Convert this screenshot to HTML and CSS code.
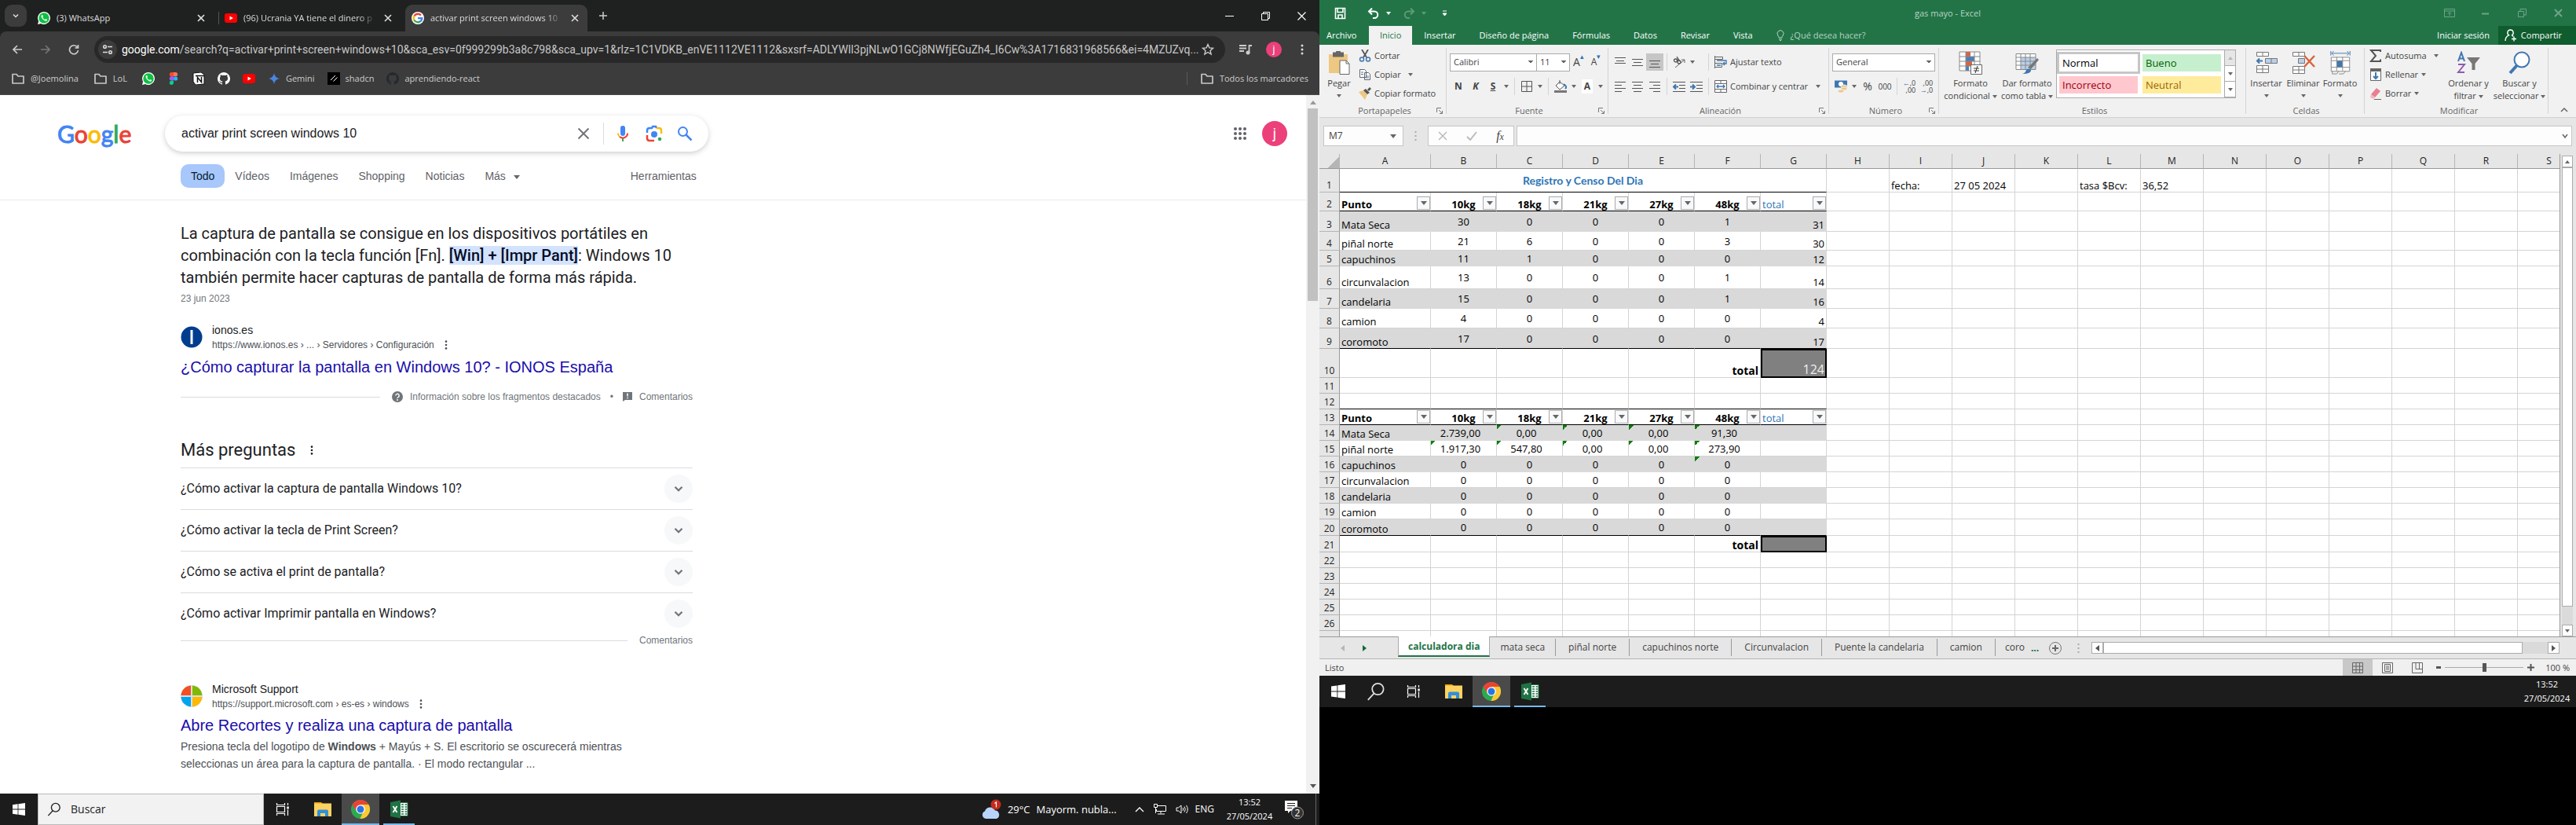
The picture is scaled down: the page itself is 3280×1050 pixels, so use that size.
FILE: index.html
```html
<!DOCTYPE html>
<html lang="es">
<head>
<meta charset="utf-8">
<title>Escritorio</title>
<link rel="stylesheet" href="styles.css">
</head>
<body>
<svg class="defs" aria-hidden="true">
  <symbol id="close" viewBox="0 0 16 16"><path d="M4 4l8 8M12 4l-8 8" stroke="currentColor" stroke-width="1.6"/></symbol>
  <symbol id="chev" viewBox="0 0 16 16"><path d="M4 6l4 4 4-4" fill="none" stroke="currentColor" stroke-width="2"/></symbol>
  <symbol id="whatsapp" viewBox="0 0 16 16"><path d="M8 0a8 8 0 0 0-6.900 12L0 16l4.100-1A8 8 0 1 0 8 0z" fill="#fff"/><circle cx="8" cy="8" r="6.700" fill="#0dc143"/><path d="M5.500 4c-1.800 1-.8 3.600 1.400 5.700 2.100 2 4.200 2.700 5.100 1 .4-.8 0-1-1.700-1.800l-1 1C8 9.500 6.600 8 6.200 7l.8-1c-.5-1.700-.7-2.200-1.500-2z" fill="#fff"/></symbol>
  <symbol id="youtube" viewBox="0 0 16 16"><rect y="2" width="16" height="12" rx="3" fill="#f00"/><path d="M6.500 5.500v5L11 8z" fill="#fff"/></symbol>
  <symbol id="google" viewBox="0 0 48 48"><circle cx="24" cy="24" r="24" fill="#fff"/><g fill="none" stroke-width="7"><path d="M36 13.500A16 16 0 0 0 10 16.500" stroke="#ea4335"/><path d="M10.200 16A16 16 0 0 0 10.200 32" stroke="#fbbc05"/><path d="M10 31.500A16 16 0 0 0 35 35.500" stroke="#34a853"/><path d="M34.500 36A16 16 0 0 0 40 24.500H24" stroke="#4285f4"/></g></symbol>
  <symbol id="folder" viewBox="0 0 16 16"><path d="M1 14V2.500h5L8 5h7v9z" fill="none" stroke="#c7c7c7" stroke-width="1.700" stroke-linejoin="round"/></symbol>
  <symbol id="github" viewBox="0 0 16 16"><path fill="currentColor" d="M8 0a8 8 0 0 0-2.500 15.600c.4.100.5-.2.500-.4v-1.400c-2.200.5-2.700-1-2.700-1-.4-.9-.9-1.200-.9-1.200-.7-.5.100-.5.100-.5.800.1 1.200.8 1.200.8.700 1.200 1.900.9 2.300.7.100-.5.300-.9.500-1.100-1.800-.2-3.600-.9-3.600-4 0-.9.300-1.600.8-2.100-.1-.2-.4-1 .1-2.100 0 0 .7-.2 2.200.8a7.500 7.500 0 0 1 4 0c1.500-1 2.200-.8 2.200-.8.500 1.100.2 1.900.1 2.100.5.500.8 1.200.8 2.100 0 3.100-1.900 3.800-3.700 4 .3.200.6.700.6 1.500v2.200c0 .2.100.5.500.4A8 8 0 0 0 8 0z"/></symbol>
  <symbol id="kebab" viewBox="0 0 16 16"><g fill="currentColor"><circle cx="8" cy="3" r="1.500"/><circle cx="8" cy="8" r="1.500"/><circle cx="8" cy="13" r="1.500"/></g></symbol>
  <symbol id="winlogo" viewBox="0 0 16 16"><path fill="#fff" d="M0 2.200 6.600 1.300V7.600H0zM7.400 1.200 16 0v7.600H7.400zM0 8.400h6.600v6.300L0 13.800zM7.400 8.400H16V16l-8.600-1.200z"/></symbol>
  <symbol id="lupa" viewBox="0 0 20 20"><g fill="none" stroke="currentColor" stroke-width="1.500"><circle cx="12" cy="7.500" r="6"/><path d="M8 12l-6.500 7"/></g></symbol>
  <symbol id="taskview" viewBox="0 0 18 18"><path d="M1.500 1v2.500h10V1M1.500 17v-2.500h10V17M1.500 5.500h10v7h-10zM15.500 1v3M15.500 9.500V17" fill="none" stroke="#fff" stroke-width="1.200"/><path d="M14.300 5.500h2.500v3h-2.500z" fill="#fff"/></symbol>
  <symbol id="explorer" viewBox="0 0 24 24"><path d="M1 3h9l2 2H1z" fill="#e39b0b"/><path d="M1 4.500h22V21H1z" fill="#fdd25f"/><path d="M5 21v-6.500a2 2 0 0 1 2-2h10a2 2 0 0 1 2 2V21h-4v-4H9v4z" fill="#2f8fdc"/></symbol>
  <symbol id="chrome" viewBox="0 0 24 24"><circle cx="12" cy="12" r="12" fill="#2da94f"/><path d="M22.400 6H12l3.500 9-4 9A12 12 0 0 0 22.400 6z" fill="#fcc934"/><path d="M1.600 6l5 8L12 6h10.400A12 12 0 0 0 1.600 6z" fill="#ea4335"/><circle cx="12" cy="12" r="5.800" fill="#fff"/><circle cx="12" cy="12" r="4.500" fill="#2a73e8"/></symbol>
  <symbol id="excel" viewBox="0 0 24 24"><path d="M12 3.500h11v17H12z" fill="#fff" stroke="#1f7244" stroke-width="1"/><path d="M15 6h3M15 9h3M15 12h3M15 15h3M15 18h3M19.500 6H22M19.500 9H22M19.500 12H22M19.500 15H22M19.500 18H22" stroke="#1f7244" stroke-width="1.500"/><path d="M1 3l13-2.500v23L1 21z" fill="#1f7244"/><path d="M4.500 8l5 8M9.500 8l-5 8" stroke="#fff" stroke-width="1.800"/></symbol>
  <symbol id="launch" viewBox="0 0 8 8"><path d="M.5 6V.5H6M3 3l4 4M7.500 4v3.500H4" fill="none" stroke="#777"/></symbol>
  <symbol id="left" viewBox="0 0 16 14"><path d="M1 1.500h14M1 5.500h9M1 9.500h14M1 13.500h9" stroke="#555" stroke-width="1"/></symbol>
</svg>

<main class="desktop">
<section class="screen" aria-label="Pantalla 1">
  <div class="browser">
    <div class="tabstrip">
      <button class="tabsearch" aria-label="Buscar pestañas"><svg width="12" height="12"><use href="#chev"/></svg></button>
      <div class="tab"><svg width="16" height="16"><use href="#whatsapp"/></svg><span>(3) WhatsApp</span><button aria-label="Cerrar"><svg width="16" height="16"><use href="#close"/></svg></button></div>
      <div class="tab divided"><svg width="16" height="16"><use href="#youtube"/></svg><span class="fade">(96) Ucrania YA tiene el dinero p</span><button aria-label="Cerrar"><svg width="16" height="16"><use href="#close"/></svg></button></div>
      <div class="tab active"><svg width="16" height="16"><use href="#google"/></svg><span class="fade">activar print screen windows 10</span><button aria-label="Cerrar"><svg width="16" height="16"><use href="#close"/></svg></button></div>
      <button class="newtab" aria-label="Nueva pestaña"><svg width="12" height="12" viewBox="0 0 12 12"><path d="M6 1v10M1 6h10" stroke="#ccc" stroke-width="1.500"/></svg></button>
      <div class="winctl">
        <button aria-label="Minimizar"><svg width="11" height="11"><path d="M0 5.500h11" stroke="#fff"/></svg></button>
        <button aria-label="Restaurar"><svg width="11" height="11"><path d="M.5 2.500h8v8h-8zM2.500 2.500v-2h8v8h-2" fill="none" stroke="#fff"/></svg></button>
        <button aria-label="Cerrar"><svg width="11" height="11"><path d="M.5.5l10 10M10.500.5l-10 10" stroke="#fff" stroke-width="1.200"/></svg></button>
      </div>
    </div>
    <div class="toolbar">
      <div class="navrow">
        <button aria-label="Atrás"><svg width="14" height="14" viewBox="0 0 14 14"><path d="M13 7H2M7 2L2 7l5 5" fill="none" stroke="#ccc" stroke-width="1.700"/></svg></button>
        <button aria-label="Adelante"><svg width="14" height="14" viewBox="0 0 14 14"><path d="M1 7h11M7 2l5 5-5 5" fill="none" stroke="#777" stroke-width="1.700"/></svg></button>
        <button aria-label="Recargar"><svg width="14" height="14" viewBox="0 0 14 14"><path d="M11.500 4A5.500 5.500 0 1 0 12.500 8M12.500 1v4H8.500" fill="none" stroke="#ccc" stroke-width="1.700"/></svg></button>
        <div class="omnibox">
          <button class="siteinfo" aria-label="Información del sitio"><svg width="14" height="14" viewBox="0 0 14 14"><g fill="none" stroke="#ddd" stroke-width="1.500"><circle cx="3.500" cy="3.500" r="1.800"/><circle cx="10.500" cy="10.500" r="1.800"/><path d="M7 3.500h6M1 10.500h6"/></g></svg></button>
          <p><b>google.com</b>/search?q=activar+print+screen+windows+10&amp;sca_esv=0f999299b3a8c798&amp;sca_upv=1&amp;rlz=1C1VDKB_enVE1112VE1112&amp;sxsrf=ADLYWIl3pjNLwO1GCj8NWfjEGuZh4_I6Cw%3A1716831968566&amp;ei=4MZUZvq...</p>
          <button aria-label="Favorito"><svg width="16" height="16" viewBox="0 0 16 16"><path d="M8 1.500l1.900 4.400 4.700.4-3.600 3.100 1.100 4.600L8 11.500 3.900 14 5 9.400 1.400 6.300l4.700-.4z" fill="none" stroke="#ccc" stroke-width="1.400"/></svg></button>
        </div>
        <button aria-label="Multimedia"><svg width="16" height="16" viewBox="0 0 16 16"><path d="M0 3h9M0 6.500h9M0 10h6M12.500 12V3H16" fill="none" stroke="#ccc" stroke-width="1.800"/><circle cx="11" cy="12" r="2.500" fill="#ccc"/></svg></button>
        <button aria-label="Perfil"><span class="avatar small">j</span></button>
        <button class="light" aria-label="Menú"><svg width="16" height="16"><use href="#kebab"/></svg></button>
      </div>
      <nav class="bookmarks">
        <a href="#" class="dir"><svg width="18" height="16"><use href="#folder"/></svg>@Joemolina</a>
        <a href="#" class="dir"><svg width="18" height="16"><use href="#folder"/></svg>LoL</a>
        <a href="#" aria-label="WhatsApp"><svg width="16" height="16"><use href="#whatsapp"/></svg></a>
        <a href="#" aria-label="Figma"><svg width="16" height="16" viewBox="0 0 16 16"><path d="M8 0H5.500a2.600 2.600 0 0 0 0 5.300H8z" fill="#f24e1e"/><path d="M8 0h2.500a2.600 2.600 0 0 1 0 5.300H8z" fill="#ff7262"/><path d="M8 5.300H5.500a2.600 2.600 0 0 0 0 5.300H8z" fill="#a259ff"/><circle cx="10.600" cy="8" r="2.600" fill="#1abcfe"/><path d="M8 10.700H5.500A2.600 2.600 0 1 0 8 13.300z" fill="#0acf83"/></svg></a>
        <a href="#" aria-label="Notion"><svg width="16" height="16" viewBox="0 0 16 16"><path d="M1 1l10-1 4 3v12l-11 1-3-4z" fill="#fff" stroke="#111"/><path d="M4 4.500h11M6.500 13V6.500l5 6V6" fill="none" stroke="#111" stroke-width="1.500"/></svg></a>
        <a href="#" class="white" aria-label="GitHub"><svg width="16" height="16"><use href="#github"/></svg></a>
        <a href="#" aria-label="YouTube"><svg width="16" height="16"><use href="#youtube"/></svg></a>
        <a href="#"><svg width="16" height="16" viewBox="0 0 16 16"><path d="M8 1c.7 4 3 6.300 7 7-4 .7-6.300 3-7 7-.7-4-3-6.300-7-7 4-.7 6.300-3 7-7z" fill="#4a86dd"/></svg>Gemini</a>
        <a href="#"><svg width="16" height="16" viewBox="0 0 16 16"><path d="M0 0h16v16H0z"/><path d="M4 10l6-6M7.500 11.500l5-5" stroke="#fff"/></svg>shadcn</a>
        <a href="#"><svg class="dark" width="16" height="16"><use href="#github"/></svg>aprendiendo-react</a>
        <a href="#" class="all"><svg width="18" height="16"><use href="#folder"/></svg>Todos los marcadores</a>
      </nav>
    </div>

    <div class="viewport">
      <div class="page">
        <header class="ghead">
          <a class="logo" href="#" aria-label="Google"><i class="b">G</i><i class="r">o</i><i class="y">o</i><i class="b">g</i><i class="g">l</i><i class="r">e</i></a>
          <form class="gsearch">
            <input type="text" aria-label="Buscar" value="activar print screen windows 10">
            <button type="button" class="clear" aria-label="Borrar"><svg width="24" height="24" viewBox="0 0 24 24"><path d="M5.500 5.500l13 13M18.500 5.500l-13 13" stroke="#70757a" stroke-width="2"/></svg></button>
            <button type="button" aria-label="Búsqueda por voz"><svg width="24" height="24" viewBox="0 0 24 24"><rect x="9" y="2" width="6" height="13" rx="3" fill="#4285f4"/><path d="M11 18h2v4h-2z" fill="#34a853"/><path d="M6 11.500a6 6 0 0 0 2 4.600" fill="none" stroke="#fbbc04" stroke-width="2"/><path d="M8 16a6 6 0 0 0 10-4.500" fill="none" stroke="#ea4335" stroke-width="2"/></svg></button>
            <button type="button" aria-label="Buscar por imagen"><svg width="24" height="24" viewBox="0 0 24 24"><circle cx="12" cy="13" r="4" fill="#4285f4"/><g fill="none" stroke-width="2.500"><path d="M3 11V8q0-3 3-3h3l1-2h4l1 2" stroke="#4285f4"/><path d="M15 5h3q3 0 3 3v4" stroke="#fbbc04"/><path d="M3 14v4q0 3 3 3h6" stroke="#ea4335"/></g><circle cx="19" cy="19" r="2.300" fill="#34a853"/></svg></button>
            <button type="submit" class="go" aria-label="Buscar"><svg width="24" height="24" viewBox="0 0 24 24"><circle cx="9.500" cy="9.500" r="5.500" fill="none" stroke="#4285f4" stroke-width="2"/><path d="M13.500 13.500l7 7" stroke="#4285f4" stroke-width="2.500"/></svg></button>
          </form>
          <div class="account">
            <button aria-label="Aplicaciones"><svg width="16" height="16" viewBox="0 0 16 16"><g fill="#5f6368"><circle cx="2" cy="2" r="2"/><circle cx="8" cy="2" r="2"/><circle cx="14" cy="2" r="2"/><circle cx="2" cy="8" r="2"/><circle cx="8" cy="8" r="2"/><circle cx="14" cy="8" r="2"/><circle cx="2" cy="14" r="2"/><circle cx="8" cy="14" r="2"/><circle cx="14" cy="14" r="2"/></g></svg></button>
            <button aria-label="Cuenta"><span class="avatar">j</span></button>
          </div>
        </header>
        <nav class="gtabs">
          <a class="on" href="#">Todo</a><a href="#">Vídeos</a><a href="#">Imágenes</a><a href="#">Shopping</a><a href="#">Noticias</a><a href="#">Más <i class="caret"></i></a>
          <a class="tools" href="#">Herramientas</a>
        </nav>
        <div class="results">
          <p class="snippet">La captura de pantalla se consigue en los dispositivos portátiles en combinación con la tecla función [Fn]. <mark>[Win] + [Impr Pant]</mark>: Windows 10 también permite hacer capturas de pantalla de forma más rápida.</p>
          <p class="date">23 jun 2023</p>
          <article class="hit first">
            <div class="src"><svg width="28" height="28" viewBox="0 0 28 28"><circle cx="14" cy="14" r="13.500" fill="#003d8f"/><path d="M14 5v18" stroke="#fff" stroke-width="3"/></svg>
              <div><p>ionos.es</p><cite>https://www.ionos.es › ... › Servidores › Configuración <svg width="14" height="14"><use href="#kebab"/></svg></cite></div></div>
            <h3><a href="#">¿Cómo capturar la pantalla en Windows 10? - IONOS España</a></h3>
          </article>
          <div class="feedback"><hr><svg width="14" height="14" viewBox="0 0 14 14"><circle cx="7" cy="7" r="7" fill="#70757a"/><path d="M4.800 5.500a2.200 2.200 0 1 1 3.200 2Q7 8 7 9" fill="none" stroke="#fff" stroke-width="1.400"/><circle cx="7" cy="11" r="1" fill="#fff"/></svg><a href="#">Información sobre los fragmentos destacados</a><span>•</span><svg width="12" height="12" viewBox="0 0 12 12"><path d="M0 0h12v10H3l-3 2z" fill="#70757a"/><path d="M6 1.500v4M6 6.800v1.500" stroke="#fff" stroke-width="1.500"/></svg><a href="#">Comentarios</a></div>
          <h2>Más preguntas <svg width="14" height="14"><use href="#kebab"/></svg></h2>
          <div class="faq">
            <button>¿Cómo activar la captura de pantalla Windows 10?<i><svg width="18" height="18"><use href="#chev"/></svg></i></button>
            <button>¿Cómo activar la tecla de Print Screen?<i><svg width="18" height="18"><use href="#chev"/></svg></i></button>
            <button>¿Cómo se activa el print de pantalla?<i><svg width="18" height="18"><use href="#chev"/></svg></i></button>
            <button>¿Cómo activar Imprimir pantalla en Windows?<i><svg width="18" height="18"><use href="#chev"/></svg></i></button>
          </div>
          <div class="feedback end"><hr><a href="#">Comentarios</a></div>
          <article class="hit second">
            <div class="src"><svg width="28" height="28" viewBox="0 0 28 28"><circle cx="14" cy="14" r="14" fill="#ddd"/><path d="M13 .5V13H.5A13.500 13.500 0 0 1 13 .5z" fill="#f25022"/><path d="M15 .5V13h12.500A13.500 13.500 0 0 0 15 .5z" fill="#7fba00"/><path d="M13 27.500V15H.5A13.500 13.500 0 0 0 13 27.500z" fill="#00a4ef"/><path d="M15 27.500V15h12.500A13.500 13.500 0 0 1 15 27.500z" fill="#ffb900"/></svg>
              <div><p>Microsoft Support</p><cite>https://support.microsoft.com › es-es › windows <svg width="14" height="14"><use href="#kebab"/></svg></cite></div></div>
            <h3><a href="#">Abre Recortes y realiza una captura de pantalla</a></h3>
            <p class="desc">Presiona tecla del logotipo de <b>Windows</b> + Mayús + S. El escritorio se oscurecerá mientras seleccionas un área para la captura de pantalla. · El modo rectangular ...</p>
          </article>
        </div>
      </div>
      <div class="gscroll"><i class="tri up"></i><i class="thumb"></i><i class="tri down"></i></div>
    </div>
  </div>
  <footer class="taskbar">
    <button aria-label="Inicio"><svg width="16" height="16"><use href="#winlogo"/></svg></button>
    <label class="tsearch"><svg width="18" height="18"><use href="#lupa"/></svg><input type="text" value="Buscar" aria-label="Buscar"></label>
    <button class="tv" aria-label="Vista de tareas"><svg width="18" height="18"><use href="#taskview"/></svg></button>
    <button aria-label="Explorador"><svg width="24" height="24"><use href="#explorer"/></svg></button>
    <button class="run focus" aria-label="Chrome"><svg width="24" height="24"><use href="#chrome"/></svg></button>
    <button class="run" aria-label="Excel"><svg width="24" height="24"><use href="#excel"/></svg></button>
    <div class="tray">
      <svg width="26" height="26" viewBox="0 0 26 26"><path d="M6 25a5 5 0 0 1-1-9.500 7 7 0 0 1 13-1 5.500 5.500 0 0 1 2 10.500z" fill="#b9d4fb"/><circle cx="19" cy="7" r="6.500" fill="#c42b1c"/><path d="M17.500 5.500L19.500 4v6.500" fill="none" stroke="#fff" stroke-width="1.200"/></svg>
      <span>29°C</span><span>Mayorm. nubla...</span>
      <svg class="up" width="12" height="8" viewBox="0 0 12 8"><path d="M1 7l5-5 5 5" fill="none" stroke="#fff" stroke-width="1.300"/></svg>
      <svg width="16" height="14" viewBox="0 0 16 14"><path d="M5 2.500h10.500v7H3.500V7M9 9.500v3M5 13h9M.5.5h4v4h-4zM2.500 4.500V12" fill="none" stroke="#fff"/></svg>
      <svg width="17" height="14" viewBox="0 0 17 14"><path d="M1 5h2.500L7 2v10L3.500 9H1zM9 5q1.500 2 0 4M11 3.500q2.500 3.500 0 7M13.500 2q3.500 5 0 10" fill="none" stroke="#fff"/></svg>
      <span class="lang">ENG</span>
      <time>13:52<br>27/05/2024</time>
      <svg width="24" height="26" viewBox="0 0 24 26"><path d="M0 2h16v13H7l-3 3v-3H0z" fill="#fff"/><path d="M3 5.500h10M3 8.500h10M3 11.500h6" stroke="#222"/><circle cx="16" cy="17.500" r="7.500" fill="#333" stroke="#999"/><text x="16" y="22" text-anchor="middle">2</text></svg>
      <i class="peek"></i>
    </div>
  </footer>
</section>

<section class="screen second-screen" aria-label="Pantalla 2">
  <div class="excel">
    <header class="xtitle">
      <div class="qat">
        <svg width="16" height="16" viewBox="0 0 16 16"><path d="M1.500 1.500h12v13h-12zM4 1.500v5h7v-5M5 14v-4h5v4" fill="none" stroke="#fff" stroke-width="1.600"/></svg>
        <svg class="undo" width="16" height="14" viewBox="0 0 16 14"><path d="M6 .5L2 4.500l4 4M2 4.500h7a4 4 0 0 1 0 8.500H7" fill="none" stroke="#fff" stroke-width="2"/></svg><i class="caret w"></i>
        <svg class="redo" width="16" height="14" viewBox="0 0 16 14"><path d="M10 .5l4 4-4 4M14 4.500H7A4 4 0 0 0 7 13h2" fill="none" stroke="#5d9a77" stroke-width="2"/></svg><i class="caret w dim"></i>
        <svg class="more" width="7" height="8" viewBox="0 0 7 8"><path d="M1 1h5M1 4l2.500 3L6 4z" fill="#fff" stroke="#fff"/></svg>
      </div>
      <h1>gas mayo - Excel</h1>
      <div class="xctl">
        <button aria-label="Opciones de cinta"><svg width="14" height="11"><path d="M.5.5h13v10H.5zM.5 3h13M7 9V5M5 6.500l2-2 2 2" fill="none" stroke="#6fa588"/></svg></button>
        <button aria-label="Minimizar"><svg width="10" height="11"><path d="M0 6.500h9" stroke="#6fa588" stroke-width="2"/></svg></button>
        <button aria-label="Restaurar"><svg width="11" height="11"><path d="M.5 3.500h7v7h-7zM3 3.500v-3h7.500V8H8" fill="none" stroke="#6fa588"/></svg></button>
        <button aria-label="Cerrar"><svg width="11" height="11"><path d="M1 1l9 9M10 1l-9 9" stroke="#6fa588" stroke-width="2"/></svg></button>
      </div>
    </header>
    <nav class="xtabs">
      <a href="#" class="file">Archivo</a><a href="#" class="on">Inicio</a><a href="#">Insertar</a><a href="#">Diseño de página</a><a href="#">Fórmulas</a><a href="#">Datos</a><a href="#">Revisar</a><a href="#">Vista</a>
      <a href="#" class="tell"><svg width="10" height="14" viewBox="0 0 10 14"><path d="M3 10Q3 8.500 1.700 7a4 4 0 1 1 6.600 0Q7 8.500 7 10zM3 12h4M4 13.500h2" fill="none" stroke="#b6d3c3"/></svg>¿Qué desea hacer?</a>
      <a href="#" class="signin">Iniciar sesión</a>
      <button class="share"><svg width="16" height="16" viewBox="0 0 16 16"><path d="M7.500 1a3.700 3.700 0 0 1 2 6.800L11 9.500M7.500 1a3.700 3.700 0 0 0-2 6.800Q1 9.500 1 15M12 9.500v6M9 12.500h6" fill="none" stroke="#fff" stroke-width="1.400"/></svg>Compartir</button>
    </nav>
    <div class="ribbon">
      <section class="grp g-clip"><div class="body">
        <button class="big"><svg width="28" height="30" viewBox="0 0 28 30"><path d="M1 4h24v24H1z" fill="#edc882"/><path d="M6 1.500h4a3 3 0 0 1 6 0h4v6H6z" fill="#666"/><path d="M15 12h8l4 4v13.500H15z" fill="#fff" stroke="#666"/><path d="M23 12v4h4" fill="none" stroke="#666"/></svg>Pegar<i class="caret"></i></button>
        <div class="stack">
          <button><svg width="16" height="16" viewBox="0 0 16 16"><path d="M4 0l6 10M12 0L6 10" stroke="#555" stroke-width="1.800"/><g fill="none" stroke="#4077b0" stroke-width="1.500"><circle cx="4" cy="12.500" r="2.500"/><circle cx="12" cy="12.500" r="2.500"/></g></svg>Cortar</button>
          <button><svg width="16" height="16" viewBox="0 0 16 16"><path d="M1.500 1.500h6l2 2v8h-8zM7.500 5.500h5l2 2v7h-7z" fill="#fff" stroke="#666"/><path d="M3 5h3M3 7.500h3M9 10h4M9 12h4" stroke="#4077b0"/></svg>Copiar <i class="caret gap"></i></button>
          <button><svg width="16" height="16" viewBox="0 0 16 16"><path d="M0 6l6-2 5 5-3 7z" fill="#edc882"/><path d="M6 4l3-2 5 5-3 2zM11 3l3-3 2 2-3 3z" fill="#555"/></svg>Copiar formato</button>
        </div></div>
        <footer>Portapapeles<svg width="8" height="8"><use href="#launch"/></svg></footer></section>

      <section class="grp g-font"><div class="body rows">
        <div class="row"><select aria-label="Fuente" class="w111"><option>Calibri</option></select><select aria-label="Tamaño" class="w42"><option>11</option></select><button class="ib a1">A<i class="blue">▴</i></button><button class="ib a2">A<i class="blue">▾</i></button></div>
        <div class="row"><button class="ib"><b>N</b></button><button class="ib"><b><em>K</em></b></button><button class="ib"><b><u>S</u></b></button><i class="caret c"></i><i class="sep"></i>
          <button class="ib" aria-label="Bordes"><svg width="14" height="14"><path d="M.5.5h13v13H.5zM7 .5v13M.5 7h13" fill="none" stroke="#555"/></svg></button><i class="caret c"></i><i class="sep"></i>
          <button class="ib" aria-label="Relleno"><svg width="16" height="16" viewBox="0 0 16 16"><path d="M7 2l6 5-6 5-5-5zM7 5V0" fill="#fff" stroke="#555"/><path d="M12 5q5 3 2 6" stroke="#4077b0" stroke-width="2" fill="none"/><path d="M0 13h16v3H0z" fill="#777"/></svg></button><i class="caret c"></i>
          <button class="ib fc"><b>A</b></button><i class="caret c"></i></div></div>
        <footer>Fuente<svg width="8" height="8"><use href="#launch"/></svg></footer></section>

      <section class="grp g-align"><div class="body rows">
        <div class="row"><button class="ib" aria-label="Arriba"><svg width="14" height="14"><path d="M0 1.500h14M2 5.500h10M0 8.500h14" stroke="#555"/></svg></button><button class="ib" aria-label="Medio"><svg width="14" height="14"><path d="M0 3.500h14M2 7.500h10M0 11.500h14" stroke="#555"/></svg></button><button class="ib on" aria-label="Abajo"><svg width="14" height="14"><path d="M0 5.500h14M2 9.500h10M0 13.500h14" stroke="#555"/></svg></button><i class="sep"></i>
          <button class="ib" aria-label="Orientación"><svg width="16" height="16" viewBox="0 0 16 16"><path d="M3 15L15 5M11 5h4v4" fill="none" stroke="#666"/><g fill="none" stroke="#555" stroke-width="1.300"><circle cx="3.500" cy="6" r="2"/><circle cx="8" cy="8" r="2"/><path d="M5 3.500l2 3.500M5 1l4 6"/></g></svg></button><i class="caret c wide"></i><i class="sep"></i>
          <button class="txt"><svg width="16" height="16" viewBox="0 0 16 16"><path d="M.5 0v16M.5 1.500h10v3H.5M.5 9.500h9v5H.5" fill="none" stroke="#666"/><path d="M3 6h12v4h-4M13 8l-2 2 2 2M3 12h5" fill="none" stroke="#4077b0" stroke-width="1.400"/></svg>Ajustar texto</button></div>
        <div class="row"><button class="ib" aria-label="Izquierda"><svg width="16" height="14"><use href="#left"/></svg></button><button class="ib" aria-label="Centro"><svg width="14" height="14"><path d="M0 1.500h14M2 5.500h10M0 9.500h14M2 13.500h10" stroke="#555"/></svg></button><button class="ib" aria-label="Derecha"><svg width="14" height="14"><path d="M0 1.500h14M5 5.500h9M0 9.500h14M5 13.500h9" stroke="#555"/></svg></button><i class="sep"></i>
          <button class="ib" aria-label="Menos sangría"><svg width="16" height="14"><path d="M0 1.500h16M8 5.500h8M8 9.500h8M0 13.500h16" stroke="#555"/><path d="M7 7.500H1M4 4.500l-3 3 3 3" fill="none" stroke="#4077b0" stroke-width="2"/></svg></button><button class="ib" aria-label="Más sangría"><svg width="16" height="14"><path d="M0 1.500h16M8 5.500h8M8 9.500h8M0 13.500h16" stroke="#555"/><path d="M0 7.500h6M3 4.500l3 3-3 3" fill="none" stroke="#4077b0" stroke-width="2"/></svg></button><i class="sep"></i>
          <button class="txt"><svg width="16" height="16" viewBox="0 0 16 16"><path d="M.5.500h15v15H.5zM.5 4.500h15M.5 11.500h15M8 .5v4M8 11.500v4" fill="#fff" stroke="#666"/><path d="M3 8h10M5 6L3 8l2 2M11 6l2 2-2 2" fill="none" stroke="#4077b0" stroke-width="1.300"/></svg>Combinar y centrar<i class="caret gap"></i></button></div></div>
        <footer>Alineación<svg width="8" height="8"><use href="#launch"/></svg></footer></section>

      <section class="grp g-num"><div class="body rows">
        <div class="row"><select aria-label="Formato de número" class="w131"><option>General</option></select></div>
        <div class="row"><button class="ib" aria-label="Moneda"><svg width="17" height="16" viewBox="0 0 17 16"><path d="M0 .5h16v9H0z" fill="#4077b0"/><circle cx="8" cy="5" r="3" fill="#fff"/><g fill="#edc882" stroke="#f1f1f1"><ellipse cx="12" cy="8" rx="4" ry="2"/><ellipse cx="12" cy="11" rx="4" ry="2"/><ellipse cx="8" cy="14" rx="4" ry="2"/></g></svg></button><i class="caret c"></i><button class="ib pc">%</button><button class="ib z">000</button><i class="sep"></i><button class="ib z d"><span><i class="blue">←</i>,0<br>,00</span></button><button class="ib z d"><span>,00<br><i class="blue">→</i>,0</span></button></div></div>
        <footer>Número<svg width="8" height="8"><use href="#launch"/></svg></footer></section>

      <section class="grp g-sty"><div class="body">
        <button class="big w70"><svg width="30" height="30" viewBox="0 0 30 30"><path d="M1 1h26v24H1z" fill="#fff"/><path d="M9 1h6v6H9zM9 13h8v6H9z" fill="#d9643c"/><path d="M9 7h11v6H9zM9 19h4v6H9z" fill="#4a7fc0"/><path d="M1 1h26v24H1zM1 7h26M1 13h26M1 19h26M9 1v24M20 1v24" fill="none" stroke="#888"/><path d="M15.500 17.500h14v12h-14z" fill="#fff" stroke="#666"/><path d="M19 22h7M19 25h7M24 19l-3 9" stroke="#333"/></svg>Formato<span>condicional <i class="caret"></i></span></button>
        <button class="big w76"><svg width="30" height="30" viewBox="0 0 30 30"><path d="M1 3.500h25v20H1z" fill="#fff"/><path d="M7 8h19v15H7z" fill="#b8d0ea"/><path d="M1 3.500h25v20H1zM1 8h25M1 13h25M1 18h25M7 3.500v20M13 3.500v20M19 3.500v20" fill="none" stroke="#888"/><path d="M28 9l2 2-10 12-4-2z" fill="#777"/><path d="M9 29q4-1 5-5 3-3 6 0 1 5-11 5z" fill="#4077b0"/></svg>Dar formato<span>como tabla <i class="caret"></i></span></button>
        <div class="gallery"><div class="cells"><button class="normal">Normal</button><button class="good">Bueno</button><button class="bad">Incorrecto</button><button class="neutral">Neutral</button></div>
          <div class="gs"><button class="off" aria-label="Subir"><i class="caret flip"></i></button><button aria-label="Bajar"><i class="caret"></i></button><button aria-label="Más"><i class="caret bar"></i></button></div></div></div>
        <footer>Estilos</footer></section>

      <section class="grp g-cell"><div class="body">
        <button class="big w47"><svg width="28" height="30" viewBox="0 0 28 30"><path d="M1.500 1.500h15v5h-15zM9 1.500v5M1.500 18.500h15v9h-15zM9 18.500v9M1.500 23h15" fill="#fff" stroke="#777"/><path d="M12.500 9.500h15v6h-15zM20 9.500v6" fill="#b8d0ea" stroke="#777"/><path d="M9 12.500H2M5 9.500l-3 3 3 3" fill="none" stroke="#4077b0" stroke-width="2"/></svg>Insertar<i class="caret"></i></button>
        <button class="big w47"><svg width="30" height="30" viewBox="0 0 30 30"><path d="M1.500 1.500h15v5h-15zM9 1.500v5M1.500 19.500h15v9h-15zM9 19.500v9M1.500 24h15" fill="#fff" stroke="#777"/><path d="M8.500 9.500h8v6h-8z" fill="#b8d0ea" stroke="#777"/><path d="M16 6l13 14M29 6L16 20" stroke="#d9643c" stroke-width="2.500"/></svg>Eliminar<i class="caret"></i></button>
        <button class="big w47"><svg width="28" height="32" viewBox="0 0 28 32"><path d="M3 3h22M5 0L2 3l3 3M23 0l3 3-3 3M1 0v6M27 0v6" fill="none" stroke="#4077b0"/><path d="M1.500 8.500h25v19h-25z" fill="#fff"/><path d="M9 13h8v9H9z" fill="#4077b0"/><path d="M1.500 8.500h25v19h-25zM1.500 13h25M1.500 22h25M9 8v19M17 8v19M3 27v4h6l3-4M12 31h6l3-4" fill="none" stroke="#888"/></svg>Formato<i class="caret"></i></button></div>
        <footer>Celdas</footer></section>

      <section class="grp g-edit"><div class="body">
        <div class="stack">
          <button><svg width="16" height="16" viewBox="0 0 16 16"><path d="M14 3V1H2l6 7-6 7h12v-2.500" fill="none" stroke="#555" stroke-width="2"/></svg>Autosuma <i class="caret gap"></i></button>
          <button><svg width="16" height="16" viewBox="0 0 16 16"><path d="M1.500.5h13v15h-13z" fill="#fff" stroke="#666"/><path d="M1 0h14v4H1z" fill="#666"/><path d="M8 5v8M5 10l3 3 3-3" fill="none" stroke="#4077b0" stroke-width="2"/></svg>Rellenar <i class="caret"></i></button>
          <button><svg width="16" height="16" viewBox="0 0 16 16"><path d="M2 9l7-8 5 4-7 8z" fill="#e8808f"/><path d="M2 9l5 4-2 2-4-2z" fill="#f3b8c0"/><path d="M6 15.500h9" stroke="#666"/></svg>Borrar <i class="caret"></i></button>
        </div>
        <button class="big w60"><svg width="30" height="30" viewBox="0 0 30 30"><path d="M2 13L6 2l4 11M3.500 9.500h5" fill="none" stroke="#4077b0" stroke-width="2"/><path d="M2 17h8L2 27h8" fill="none" stroke="#8e5bb0" stroke-width="2"/><path d="M13 8h17l-6.500 8v8h-4v-8z" fill="#777"/></svg>Ordenar y<span>filtrar <i class="caret"></i></span></button>
        <button class="big w70"><svg width="28" height="30" viewBox="0 0 28 30"><circle cx="17" cy="11" r="9.500" fill="#fff" stroke="#4077b0" stroke-width="2"/><path d="M11 18L2 28" stroke="#4077b0" stroke-width="4"/></svg>Buscar y<span>seleccionar <i class="caret"></i></span></button></div>
        <footer>Modificar</footer></section>
      <button class="collapse" aria-label="Contraer"><svg width="10" height="6"><path d="M1 5l4-4 4 4" fill="none" stroke="#666" stroke-width="1.500"/></svg></button>
    </div>

    <div class="fbar">
      <label class="namebox"><input type="text" value="M7" aria-label="Cuadro de nombres"><i class="caret"></i></label>
      <svg class="grip" width="3" height="12"><path d="M1.500 0v2M1.500 5v2M1.500 10v2" stroke="#aaa" stroke-width="2"/></svg>
      <div class="fx"><svg width="12" height="12"><path d="M1 1l10 10M11 1L1 11" stroke="#bbb" stroke-width="1.500"/></svg><svg width="14" height="12"><path d="M1 7l4 4 8-10" fill="none" stroke="#bbb" stroke-width="2"/></svg><em>f<small>x</small></em></div>
      <label class="formula"><input type="text" value="" aria-label="Barra de fórmulas"><svg width="10" height="8"><path d="M2 2l3 4 3-4" fill="none" stroke="#666" stroke-width="1.500"/></svg></label>
    </div>

    <div class="gridwrap">
      <div class="sheet">
      <table>
        <colgroup><col class="c0"><col class="cA"><col class="cB" span="6"><col class="cH" span="12"></colgroup>
        <thead><tr><th class="corner"></th><th>A</th><th>B</th><th>C</th><th>D</th><th>E</th><th>F</th><th>G</th><th>H</th><th>I</th><th>J</th><th>K</th><th>L</th><th>M</th><th>N</th><th>O</th><th>P</th><th>Q</th><th>R</th><th>S</th></tr></thead>
        <tbody>
        <tr class="h30 line"><th>1</th><td colspan="7" class="title">Registro y Censo Del Dia</td><td></td><td>fecha:</td><td>27 05 2024</td><td></td><td>tasa $Bcv:</td><td>36,52</td><td colspan="6" class="fill"></td></tr>
        <tr class="h24 line filt"><th>2</th><td>Punto<button aria-label="Filtro"></button></td><td>10kg<button aria-label="Filtro"></button></td><td>18kg<button aria-label="Filtro"></button></td><td>21kg<button aria-label="Filtro"></button></td><td>27kg<button aria-label="Filtro"></button></td><td>48kg<button aria-label="Filtro"></button></td><td>total<button aria-label="Filtro"></button></td><td colspan="12" class="fill"></td></tr>
        <tr class="h26 d g"><th>3</th><td>Mata Seca</td><td>30</td><td>0</td><td>0</td><td>0</td><td>1</td><td>31</td><td colspan="12" class="fill"></td></tr>
        <tr class="h24 d"><th>4</th><td>piñal norte</td><td>21</td><td>6</td><td>0</td><td>0</td><td>3</td><td>30</td><td colspan="12" class="fill"></td></tr>
        <tr class="h20 d g"><th>5</th><td>capuchinos</td><td>11</td><td>1</td><td>0</td><td>0</td><td>0</td><td>12</td><td colspan="12" class="fill"></td></tr>
        <tr class="h29 d"><th>6</th><td>circunvalacion</td><td>13</td><td>0</td><td>0</td><td>0</td><td>1</td><td>14</td><td colspan="12" class="fill"></td></tr>
        <tr class="h25 d g"><th>7</th><td>candelaria</td><td>15</td><td>0</td><td>0</td><td>0</td><td>1</td><td>16</td><td colspan="12" class="fill"></td></tr>
        <tr class="h25 d"><th>8</th><td>camion</td><td>4</td><td>0</td><td>0</td><td>0</td><td>0</td><td>4</td><td colspan="12" class="fill"></td></tr>
        <tr class="h26 d g line"><th>9</th><td>coromoto</td><td>17</td><td>0</td><td>0</td><td>0</td><td>0</td><td>17</td><td colspan="12" class="fill"></td></tr>
        <tr class="h37"><th>10</th><td></td><td></td><td></td><td></td><td></td><td class="tot">total</td><td class="sum">124</td><td colspan="12" class="fill"></td></tr>
        <tr><th>11</th><td></td><td></td><td></td><td></td><td></td><td></td><td></td><td colspan="12" class="fill"></td></tr>
        <tr class="line"><th>12</th><td></td><td></td><td></td><td></td><td></td><td></td><td></td><td colspan="12" class="fill"></td></tr>
        <tr class="line filt"><th>13</th><td>Punto<button aria-label="Filtro"></button></td><td>10kg<button aria-label="Filtro"></button></td><td>18kg<button aria-label="Filtro"></button></td><td>21kg<button aria-label="Filtro"></button></td><td>27kg<button aria-label="Filtro"></button></td><td>48kg<button aria-label="Filtro"></button></td><td>total<button aria-label="Filtro"></button></td><td colspan="12" class="fill"></td></tr>
        <tr class="d g m"><th>14</th><td>Mata Seca</td><td>2.739,00</td><td class="e">0,00</td><td class="e">0,00</td><td class="e">0,00</td><td class="e">91,30</td><td></td><td colspan="12" class="fill"></td></tr>
        <tr class="d m"><th>15</th><td>piñal norte</td><td class="e">1.917,30</td><td class="e">547,80</td><td class="e">0,00</td><td class="e">0,00</td><td class="e">273,90</td><td></td><td colspan="12" class="fill"></td></tr>
        <tr class="d g"><th>16</th><td>capuchinos</td><td>0</td><td>0</td><td>0</td><td>0</td><td class="e">0</td><td></td><td colspan="12" class="fill"></td></tr>
        <tr class="d"><th>17</th><td>circunvalacion</td><td>0</td><td>0</td><td>0</td><td>0</td><td>0</td><td></td><td colspan="12" class="fill"></td></tr>
        <tr class="d g"><th>18</th><td>candelaria</td><td>0</td><td>0</td><td>0</td><td>0</td><td>0</td><td></td><td colspan="12" class="fill"></td></tr>
        <tr class="d"><th>19</th><td>camion</td><td>0</td><td>0</td><td>0</td><td>0</td><td>0</td><td></td><td colspan="12" class="fill"></td></tr>
        <tr class="h21 d g line"><th>20</th><td>coromoto</td><td>0</td><td>0</td><td>0</td><td>0</td><td>0</td><td></td><td colspan="12" class="fill"></td></tr>
        <tr class="h21"><th>21</th><td></td><td></td><td></td><td></td><td></td><td class="tot">total</td><td class="sum"></td><td colspan="12" class="fill"></td></tr>
        <tr><th>22</th><td></td><td></td><td></td><td></td><td></td><td></td><td></td><td colspan="12" class="fill"></td></tr>
        <tr><th>23</th><td></td><td></td><td></td><td></td><td></td><td></td><td></td><td colspan="12" class="fill"></td></tr>
        <tr><th>24</th><td></td><td></td><td></td><td></td><td></td><td></td><td></td><td colspan="12" class="fill"></td></tr>
        <tr><th>25</th><td></td><td></td><td></td><td></td><td></td><td></td><td></td><td colspan="12" class="fill"></td></tr>
        <tr><th>26</th><td></td><td></td><td></td><td></td><td></td><td></td><td></td><td colspan="12" class="fill"></td></tr>
        <tr class="h7"><th></th><td></td><td></td><td></td><td></td><td></td><td></td><td></td><td colspan="12" class="fill"></td></tr>
        </tbody>
      </table>
      </div>
      <div class="vscroll"><i class="btn"><i class="caret flip"></i></i><i class="thumb"></i><i class="btn"><i class="caret"></i></i></div>
    </div>

    <nav class="sheets">
      <div class="arrows"><i class="tl"></i><i class="tr"></i></div>
      <a class="on" href="#">calculadora dia</a><a href="#">mata seca</a><a href="#">piñal norte</a><a href="#">capuchinos norte</a><a href="#">Circunvalacion</a><a href="#">Puente la candelaria</a><a href="#">camion</a><a class="cut" href="#">coro</a>
      <b>...</b>
      <button class="plus" aria-label="Hoja nueva"><svg width="16" height="16"><circle cx="8" cy="8" r="7.500" fill="none" stroke="#777"/><path d="M8 4v8M4 8h8" stroke="#666" stroke-width="2"/></svg></button>
      <svg class="grip" width="3" height="12"><path d="M1.500 0v2M1.500 5v2M1.500 10v2" stroke="#aaa" stroke-width="2"/></svg>
      <div class="hscroll"><i class="btn"><i class="tl k"></i></i><i class="thumb"></i><i class="btn"><i class="tr k"></i></i></div>
    </nav>
    <footer class="status"><span>Listo</span>
      <div class="views">
        <button class="on" aria-label="Normal"><svg width="14" height="14"><path d="M.5.5h13v13H.5zM.5 5h13M.5 9.500h13M5 .5v13M9.500 .5v13" fill="none" stroke="#666"/></svg></button>
        <button aria-label="Diseño de página"><svg width="14" height="14"><path d="M.5.5h13v13H.5zM3.500 2.500h7v9h-7zM5 5h4M5 7h4M5 9h4" fill="none" stroke="#666"/></svg></button>
        <button aria-label="Salto de página"><svg width="14" height="14"><path d="M.5.5h13v13H.5zM5 .5v8h8.500M9.500 .5v8" fill="none" stroke="#666"/></svg></button>
      </div>
      <svg width="6" height="3"><path d="M0 1.500h6" stroke="#555" stroke-width="3"/></svg>
      <input type="range" aria-label="Zoom" min="0" max="100" value="50">
      <svg width="9" height="9"><path d="M0 4.500h9M4.500 0v9" stroke="#555" stroke-width="2"/></svg>
      <span class="pct">100 %</span>
    </footer>
  </div>
  <footer class="taskbar">
    <button aria-label="Inicio"><svg width="18" height="18"><use href="#winlogo"/></svg></button>
    <button class="light" aria-label="Buscar"><svg width="24" height="24"><use href="#lupa"/></svg></button>
    <button class="tv" aria-label="Vista de tareas"><svg width="18" height="18"><use href="#taskview"/></svg></button>
    <button aria-label="Explorador"><svg width="24" height="24"><use href="#explorer"/></svg></button>
    <button class="run focus" aria-label="Chrome"><svg width="24" height="24"><use href="#chrome"/></svg></button>
    <button class="run" aria-label="Excel"><svg width="24" height="24"><use href="#excel"/></svg></button>
    <div class="tray"><time>13:52<br>27/05/2024</time></div>
  </footer>
</section>
</main>
</body>
</html>
```
FILE: styles.css
```css
*{box-sizing:border-box}
body,p,h1,h2,h3,hr{margin:0}
body{background:#000;font:11px/16px "Open Sans",sans-serif;color:#222}
button{font:inherit;color:inherit;background:none;border:0;padding:0;margin:0;display:flex;align-items:center;justify-content:center}
input,select{font:inherit;color:inherit;border:0;outline:0;margin:0;padding:0;background:none;min-width:0}
a{color:inherit;text-decoration:none}
i,cite{font-style:normal}
svg{flex:none;display:block}
.defs{position:absolute;width:0;height:0}
.desktop{display:grid;grid-template-columns:21fr 20fr;min-height:100vh;white-space:nowrap}
.screen{display:flex;flex-direction:column;min-width:0}

/* browser frame */
.browser{flex:1;display:flex;flex-direction:column;background:#1f2020;color:#d0d0d0}
.tabstrip{display:flex;align-items:center;height:40px;gap:6px;padding-left:6px;color:#ddd}
.tabsearch{width:28px;height:28px;border-radius:9px;background:#3c3c3c}
.tab{display:flex;align-items:center;gap:8px;width:232px;height:34px;padding:0 8px;align-self:flex-end}
.tab span{flex:1;overflow:hidden;line-height:18px}
.tab .fade{-webkit-mask-image:linear-gradient(90deg,#000 88%,transparent);mask-image:linear-gradient(90deg,#000 88%,transparent)}
.tab.divided{background:linear-gradient(#555,#555) 0 50%/1px 16px no-repeat}
.tab.active{background:#3c3c3c;border-radius:9px 9px 0 0}
.newtab{width:28px;height:28px}
.winctl{margin-left:auto;display:flex}
.winctl button{width:46px;height:40px}
.toolbar{background:#3c3c3c;border-radius:8px 8px 0 0;border-bottom:1px solid #4a4a4a}
.navrow{display:flex;align-items:center;padding:6px 4px 0}
.navrow>button{width:36px;height:34px}
.light{color:#ddd}
.omnibox{flex:1;min-width:0;display:flex;align-items:center;height:34px;margin:0 8px;padding:0 14px 0 5px;border-radius:17px;background:#282828}
.omnibox p{flex:1;min-width:0;overflow:hidden;font:14px/20px Roboto,sans-serif;color:#c7c7c7}
.omnibox p b{font-weight:400;color:#fff}
.siteinfo{width:24px;height:24px;margin-right:6px;border-radius:12px;background:#3c3c3c}
.avatar{display:flex;align-items:center;justify-content:center;width:32px;height:32px;border-radius:50%;background:#ec407a;color:#fff;font:18px/20px Roboto,sans-serif}
.avatar.small{width:20px;height:20px;font-size:12px}
.bookmarks{display:flex;height:40px;padding:0 6px;align-items:center;color:#ccc}
.bookmarks a{display:flex;align-items:center;gap:7px;padding:0 8px}
.bookmarks .dir{padding-right:11px}
.bookmarks .white{color:#fff}
.dark{color:#24292f}
.bookmarks .all{margin-left:auto;border-left:1px solid #5a5a5a;padding-left:16px}

/* search page */
.viewport{flex:1;display:flex;background:#fff;color:#202124}
.page{flex:1;min-width:0;font-family:"Liberation Sans",Arial,sans-serif}
.gscroll{width:17px;background:#f1f1f1;display:flex;flex-direction:column;align-items:center;padding:7px 0}
.gscroll .thumb{width:13px;height:28%;margin:5px 0 auto;background:#c1c1c1}
.tri{border:4px solid transparent}
.tri.up{border-top:0;border-bottom:5px solid #999}
.tri.down{border-bottom:0;border-top:5px solid #555}
.ghead{display:flex;align-items:center;padding:26px 24px 0 73px}
.logo{width:137px;font:30px/46px Lato,sans-serif}
.logo i{-webkit-text-stroke:1px currentColor}
.b{color:#4285f4}.r{color:#ea4335}.y{color:#fbbc05}.logo .g{color:#34a853}
.gsearch{display:flex;align-items:center;width:692px;height:46px;padding:0 11px 0 21px;border-radius:23px;box-shadow:0 2px 6px rgba(60,64,67,.25)}
.gsearch input{flex:1;font-size:16px}
.gsearch button{width:40px}
.gsearch .clear{width:49px;height:28px;padding-right:2px;border-right:1px solid #dadce0;margin-right:4px}
.gsearch .go{width:38px}
.account{margin-left:auto;display:flex;gap:20px}
.gtabs{display:flex;align-items:center;padding:16px 0 15px 230px;border-bottom:1px solid #ebebeb;color:#5f6368;font-size:14px;line-height:30px}
.gtabs a{padding:0 13px}
.gtabs .on{background:#a8c7fa;color:#001d35;border-radius:10px}
.gtabs .tools{margin-left:115px}
.caret{display:inline-block;border:3px solid transparent;border-top:4px solid #666;border-bottom:0;vertical-align:middle;flex:none}
.gtabs .caret{border-width:5px 4px 0;margin-left:6px}
.results{width:652px;margin-left:230px;padding-top:28px;white-space:normal}
.snippet{font:20px/28px Roboto,sans-serif}
mark{background:#d3e3fd;color:#040c28;font-weight:500}
.date{margin-top:3px;font-size:12px;line-height:20px;color:#70757a}
.hit.first{margin-top:20px}
.src{display:flex;align-items:center;gap:12px;font-size:14px}
.src p{line-height:20px}
.src cite{display:flex;align-items:center;gap:8px;font-size:12px;line-height:18px;color:#4d5156}
.hit h3{font-size:20px;line-height:26px;font-weight:400;margin-top:6px;color:#1a0dab}
.feedback{display:flex;align-items:center;height:16px;margin-top:17px;color:#70757a;font-size:12px}
.feedback hr{flex:1;border:0;border-top:1px solid #dadce0;margin-right:15px}
.feedback a{margin-left:9px}
.feedback span{margin:0 12px}
.feedback.end{margin-top:0}
.feedback.end a{margin:0}
h2{display:flex;align-items:center;gap:14px;margin-top:46px;font:22px/28px Roboto,sans-serif}
.faq{margin-top:8px}
.faq button{width:100%;height:53px;justify-content:space-between;border-top:1px solid #dadce0;font:16px/24px Roboto,sans-serif}
.faq i{width:36px;height:36px;border-radius:50%;background:#f7f8f9;display:flex;align-items:center;justify-content:center;color:#70757a}
.hit.second{margin-top:44px}
.hit.second h3{margin-top:5px}
.desc{max-width:600px;margin-top:3px;font-size:14px;line-height:22px;color:#4d5156}

/* taskbar */
.taskbar{display:flex;height:40px;background:#1c1c1c;color:#fff}
.taskbar>button{width:48px;height:40px}
.taskbar .tv{margin-right:3px}
.taskbar .run{border-top:2px solid transparent;border-bottom:2px solid #76b9ed}
.taskbar .focus{background:#4a4a4a;background-clip:border-box;margin-right:5px}
.taskbar .focus+.run{width:40px}
.tsearch{display:flex;align-items:center;gap:12px;width:288px;padding-left:11px;background:#f2f2f2;border:1px solid #bbb;color:#222}
.tsearch input{flex:1;font-size:14px}
.tray{margin-left:auto;display:flex;align-items:center;font-size:13px;gap:8px;padding-right:4px}
.tray .up{margin-left:15px}
.tray svg+svg{margin-left:4px}
.tray .lang{font-size:12px}
.tray time{width:74px;text-align:center;font-size:11px;line-height:18px}
.tray text{font:12px "Open Sans",sans-serif;fill:#fff}
.peek{width:1px;height:40px;background:#666;margin-left:7px}
.second-screen .tray{padding:0}

/* excel title and ribbon */
.excel{background:#e6e6e6;color:#444;overflow:hidden}
.xtitle{display:grid;grid-template-columns:1fr auto 1fr;align-items:center;height:33px;background:#227447;color:#b9d5c5}
.xtitle h1{font-size:11px;line-height:16px;font-weight:400}
.qat{display:flex;align-items:center;padding-left:19px}
.undo{margin-left:26px}
.redo{margin-left:15px}
.more{margin-left:20px}
.caret.w{border-top-color:#fff;margin-left:8px}
.caret.dim{border-top-color:#5d9a77}
.xctl{display:flex;justify-content:flex-end}
.xctl button{width:46px;height:30px}
.xtabs{display:flex;height:24px;background:#227447;color:#fff;line-height:24px}
.xtabs a{padding:0 15px}
.xtabs .file{width:63px;padding:0 9px}
.xtabs .on{background:#f1f1f1;color:#227447;padding:0 14px}
.xtabs .tell{display:flex;align-items:center;gap:8px;color:#b6d3c3}
.signin{margin-left:auto}
.xtabs .signin{padding:0 11px}
.share{background:#0f5c2e;width:99px;gap:5px;padding-right:10px}
.ribbon{display:flex;background:#f1f1f1;border-bottom:1px solid #d2d2d2;height:93px}
.grp{display:flex;flex-direction:column;position:relative;flex:none;background:linear-gradient(#d4d4d4,#d4d4d4) 100% 4px/1px 84px no-repeat}
.grp .body{height:76px;display:flex}
.grp footer{display:flex;justify-content:center;color:#666;line-height:16px}
.grp footer svg{position:absolute;right:5px;bottom:4px}
.g-clip{width:162px;padding-left:4px}
.g-font{width:206px;padding-left:4px}
.g-align{width:281px;padding-left:4px}
.g-num{width:140px;padding-left:4px}
.g-sty{width:391px;padding-left:5px}
.g-cell{width:151px;padding-left:2px}
.g-edit{width:234px;padding-left:6px}
.big{flex-direction:column;justify-content:flex-start;padding-top:8px;width:42px;line-height:16px}
.big svg{height:30px;margin-bottom:3px}
.big>.caret{margin-top:6px}
.w47{width:47px}.w60{width:60px}.w70{width:70px}.w76{width:74px}
.stack{padding:2px 0 0 4px}
.stack button{height:24px;gap:4px}
.stack .gap{margin-left:5px}
.g-edit .stack{width:96px;padding-left:0}
.rows{flex-direction:column;padding-top:11px;gap:9px}
.row{display:flex;align-items:center;height:22px}
.row select{height:23px;border:1px solid #ababab;appearance:none;padding-left:4px;background-color:#fff;background-image:linear-gradient(to bottom left,#666 50%,transparent 50%),linear-gradient(to bottom right,#666 50%,transparent 50%);background-size:3px 4px;background-position:right 7px center,right 4px center;background-repeat:no-repeat}
.w111{width:111px}.w42{width:43px;margin-left:-1px}.w131{width:131px}
.ib{width:22px;height:22px;font-size:12px;color:#444}
.ib.on{background:#c6c6c6}
.a1{font-size:14px}
.blue{color:#2f6fb5;font-size:9px;line-height:8px}
.a1 .blue,.a2 .blue{align-self:flex-start}
.ib.fc b{background:#fff;line-height:18px;padding:0 3px}
.ib.pc{font-size:14px}
.ib.z{font-size:10px}
.ib.d{line-height:9px;text-align:right;font-size:9px}
.c{margin:0 3px}
.wide{margin-right:13px}
.sep{width:1px;height:22px;background:#d4d4d4;margin:0 4px}
.txt{gap:4px;padding-left:3px}
.txt .gap{margin-left:6px}
.gallery{display:flex;height:62px;margin-top:6px;border:1px solid #ababab;background:#fff}
.cells{display:grid;grid-template-columns:100px 100px;grid-auto-rows:22px;gap:6px;padding:5px 4px 0 3px;font-size:13px}
.cells button{justify-content:flex-start;padding-left:4px}
.normal{outline:3px solid #c6c6c6;color:#000}
.good{background:#c6efce;color:#006100}
.bad{background:#ffc7ce;color:#9c0006}
.neutral{background:#ffeb9c;color:#9c6500}
.gs{display:grid;grid-template-rows:1fr 1fr 1fr}
.gs button{width:14px;border-left:1px solid #ababab;border-bottom:1px solid #ababab}
.gs .off{background:#e6e6e6}
.caret.flip{border-top:0;border-bottom:4px solid #666}
.off .caret.flip{border-bottom-color:#b5b5b5}
.bar{box-shadow:0 -6px 0 -2px #666}
.collapse{margin:0 10px 6px auto;align-self:flex-end}

/* formula bar */
.fbar{display:flex;align-items:center;padding:10px 5px;line-height:16px}
.namebox{display:flex;align-items:center;width:102px;height:26px;background:#fdfdfd;border:1px solid #c6c6c6;padding:0 8px 0 6px}
.namebox input{flex:1;font-size:12px}
.namebox .caret{border-width:5px 4px 0}
.fbar .grip{margin:0 14px}
.fx{display:flex;align-items:center;justify-content:space-around;width:110px;height:26px;background:#fdfdfd;border:1px solid #c6c6c6}
.fx em{font:italic 16px/20px "Liberation Serif",serif}
.fx small{font-size:12px}
.formula{flex:1;display:flex;align-items:center;height:26px;margin-left:3px;padding-right:3px;background:#fdfdfd;border:1px solid #c6c6c6}
.formula input{flex:1}

/* worksheet */
.gridwrap{display:flex;border-bottom:1px solid #999}
.sheet{flex:1;min-width:0;overflow:hidden;background:#fff;border-right:1px solid #999}
table{width:1606px;table-layout:fixed;border-collapse:separate;border-spacing:0;font-size:13px;line-height:16px;color:#000}
.c0{width:26px}.cA{width:116px}.cB{width:84px}.cH{width:80px}
th{font-weight:400;padding:0;background:#e6e6e6;color:#222;border-right:1px solid #999;border-bottom:1px solid #b5b5b5;vertical-align:bottom;font-size:12px}
thead th{height:19px;border-right-color:#b5b5b5;border-bottom-color:#999;vertical-align:middle;line-height:14px}
.corner{background:linear-gradient(135deg,#e6e6e6 66%,#b5b5b5 66%)}
tbody tr{height:20px}
td{padding:0 2px;border-right:1px solid #d4d4d4;border-bottom:1px solid #d4d4d4;vertical-align:bottom;overflow:hidden}
.fill{background:repeating-linear-gradient(90deg,transparent 0 79px,#d4d4d4 79px 80px)}
tbody .h7{height:7px}
.h7 th,.h7 td{border-bottom:0}
tbody .h21{height:21px}tbody .h24{height:24px}tbody .h25{height:25px}tbody .h26{height:26px}tbody .h29{height:29px}tbody .h30{height:30px}tbody .h37{height:37px}
.title{text-align:center;vertical-align:middle;font:bold 14px/16px Lato,sans-serif;color:#2e75b6}
.line td:nth-child(-n+8):not(.fill){border-bottom-color:#000}
.line:first-child td:nth-child(n+3):not(.fill){border-bottom-color:#d4d4d4}
.filt td:not(.fill){position:relative;font-weight:700;text-align:center}
.filt td:nth-child(2):not(.fill){text-align:left}
.filt td:nth-child(8):not(.fill){text-align:left;font-weight:400;color:#2e75b6}
.filt button{position:absolute;right:0;bottom:1px;width:17px;height:17px;border:1px solid #ababab;background:#f8f9fb}
.filt button::after{content:"";border:4px solid transparent;border-top:5px solid #666;border-bottom:0}
.d td:nth-child(n+3):nth-child(-n+7){text-align:center;vertical-align:middle}
.d td:nth-child(8){text-align:right}
.g td:nth-child(-n+8){background-color:#d9d9d9;border-right-color:#d9d9d9}
.g:not(.line) td:nth-child(-n+8){border-bottom-color:#d9d9d9}
.m td:nth-child(n+3):nth-child(-n+7){padding-right:10px}
.e{background-image:linear-gradient(135deg,#0a800a 50%,transparent 50%);background-size:6px 6px;background-repeat:no-repeat}
.tot{text-align:right;font-weight:700;font-size:14px}
.sum{background:#808080;color:#eee;text-align:right;font-size:16px;line-height:18px;border:2px solid #000;padding:0 1px}
.h21 .sum{line-height:14px}
.vscroll{width:20px;display:flex;flex-direction:column;padding:2px 4px 0 2px}
.btn,.thumb{display:flex;align-items:center;justify-content:center}
.vscroll .btn{height:15px;background:#fff;border:1px solid #ababab}
.vscroll .thumb{flex:1;background:#fff;border:1px solid #ababab;box-shadow:0 23px 0 #dadada;margin-bottom:23px}
.sheets{display:flex;align-items:center;height:28px;line-height:22px;font-size:12px;border-bottom:1px solid #b5b5b5;color:#444}
.arrows{display:flex;gap:23px;padding-left:27px;width:100px}
.tl,.tr{border:5px solid transparent;border-width:4px 5px}
.tl{border-left:0;border-right-color:#b5b5b5}
.tr{border-right:0;border-left-color:#14683a}
.k.tl{border-right-color:#555}.k.tr{border-left-color:#555}
.sheets a{padding:0 16px;border-right:1px solid #999;align-self:flex-start;margin-top:2px}
.sheets a.on{margin-top:-1px;padding:2px 12px 0;background:#fff;color:#227447;font-weight:700;border-right:1px solid #ababab;border-left:1px solid #ababab;border-bottom:2px solid #227447}
.sheets a.on+a{padding:0 13px}
.sheets a.cut{width:39px;padding:0 0 0 12px;overflow:hidden;border:0}
.sheets>b{color:#14683a;margin-left:6px}
.plus{margin:0 20px 0 13px}
.hscroll{flex:1;display:flex;height:15px;margin:0 21px 0 15px;background:#dadada}
.hscroll .btn{width:15px;background:#fff;border:1px solid #ababab}
.hscroll .thumb{flex:1;background:#fff;border:1px solid #ababab;margin-right:32px}
.status{display:flex;align-items:center;height:21px;background:#f0f0f0;padding:0 8px 0 7px;gap:5px}
.views{margin-left:auto;display:flex}
.views button{width:38px;height:21px}
.views .on{background:#c8c8c8}
input[type=range]{appearance:none;width:100px;height:12px;background:linear-gradient(#aaa,#aaa) 0 50%/100% 1px no-repeat}
input[type=range]::-webkit-slider-thumb{appearance:none;width:5px;height:11px;background:#555}
.pct{margin-left:9px}
```
